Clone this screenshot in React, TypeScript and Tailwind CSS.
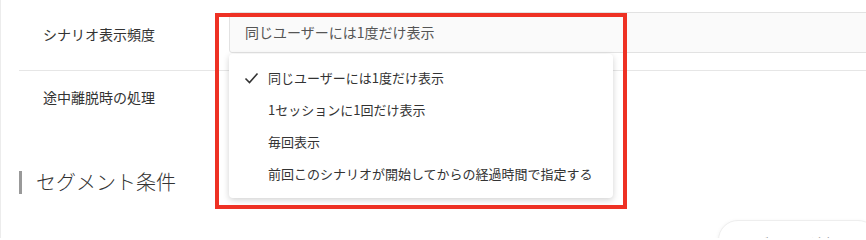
import React from "react";

const options = [
  "同じユーザーには1度だけ表示",
  "1セッションに1回だけ表示",
  "毎回表示",
  "前回このシナリオが開始してからの経過時間で指定する",
];

const CheckIcon = () => (
  <svg width="15" height="12" viewBox="0 0 15 12" fill="none">
    <path d="M1.5 6.5 L5.5 10.5 L13.5 1.5" stroke="#333" strokeWidth="1.6" />
  </svg>
);

export default function App() {
  const selected = options[0];

  return (
    <div
      className="relative w-[866px] h-[238px] overflow-hidden bg-white border-l border-[#ececec]"
      style={{ fontFamily: '"Noto Sans CJK JP", "Noto Sans", sans-serif' }}
    >
      <div className="ml-[18px]">
        <div className="flex h-[71px] border-b border-[#e6e6e6]">
          <div className="w-[210px] shrink-0 pl-[24px] pt-[22px] text-[14px] leading-[24px] text-[#333]">
            シナリオ表示頻度
          </div>
          <div className="mt-[12px] h-[41px] w-[700px] shrink-0 rounded-[3px] border border-[#e2e2e2] bg-[#fafafa] pl-[15px] text-[14px] leading-[39px] text-[#555]">
            {selected}
          </div>
        </div>
        <div className="flex h-[56px]">
          <div className="pl-[24px] pt-[14px] text-[14px] leading-[24px] text-[#333]">
            途中離脱時の処理
          </div>
        </div>
        <div className="mt-[43px] flex items-center">
          <div className="h-[23px] w-[3px] bg-[#999]" />
          <h2 className="ml-[14px] text-[20px] leading-[24px] font-light text-[#333]">
            セグメント条件
          </h2>
        </div>
      </div>

      {/* open select menu */}
      <div className="absolute left-[228px] top-[54px] w-[384px] rounded-[4px] bg-white py-[8px] shadow-[0_2px_6px_rgba(0,0,0,0.18)]">
        {options.map((opt) => (
          <div key={opt} className="flex h-[32px] items-center text-[13px] text-[#333]">
            <div className="flex w-[39px] justify-end pr-[9px]">
              {opt === selected && <CheckIcon />}
            </div>
            <span>{opt}</span>
          </div>
        ))}
      </div>

      {/* highlight frame */}
      <div className="pointer-events-none absolute left-[214px] top-[13px] h-[196px] w-[412px] border-4 border-[#ee3124]" />

      {/* cut-off pill button */}
      <div className="absolute left-[717px] top-[220px] h-[40px] w-[160px] rounded-[20px] border border-[#eeeeee] bg-white pl-[22px] pt-[12px] text-[14px] text-[#888] shadow-[0_1px_4px_rgba(0,0,0,0.06)]">
        セグメント追加
      </div>
    </div>
  );
}
